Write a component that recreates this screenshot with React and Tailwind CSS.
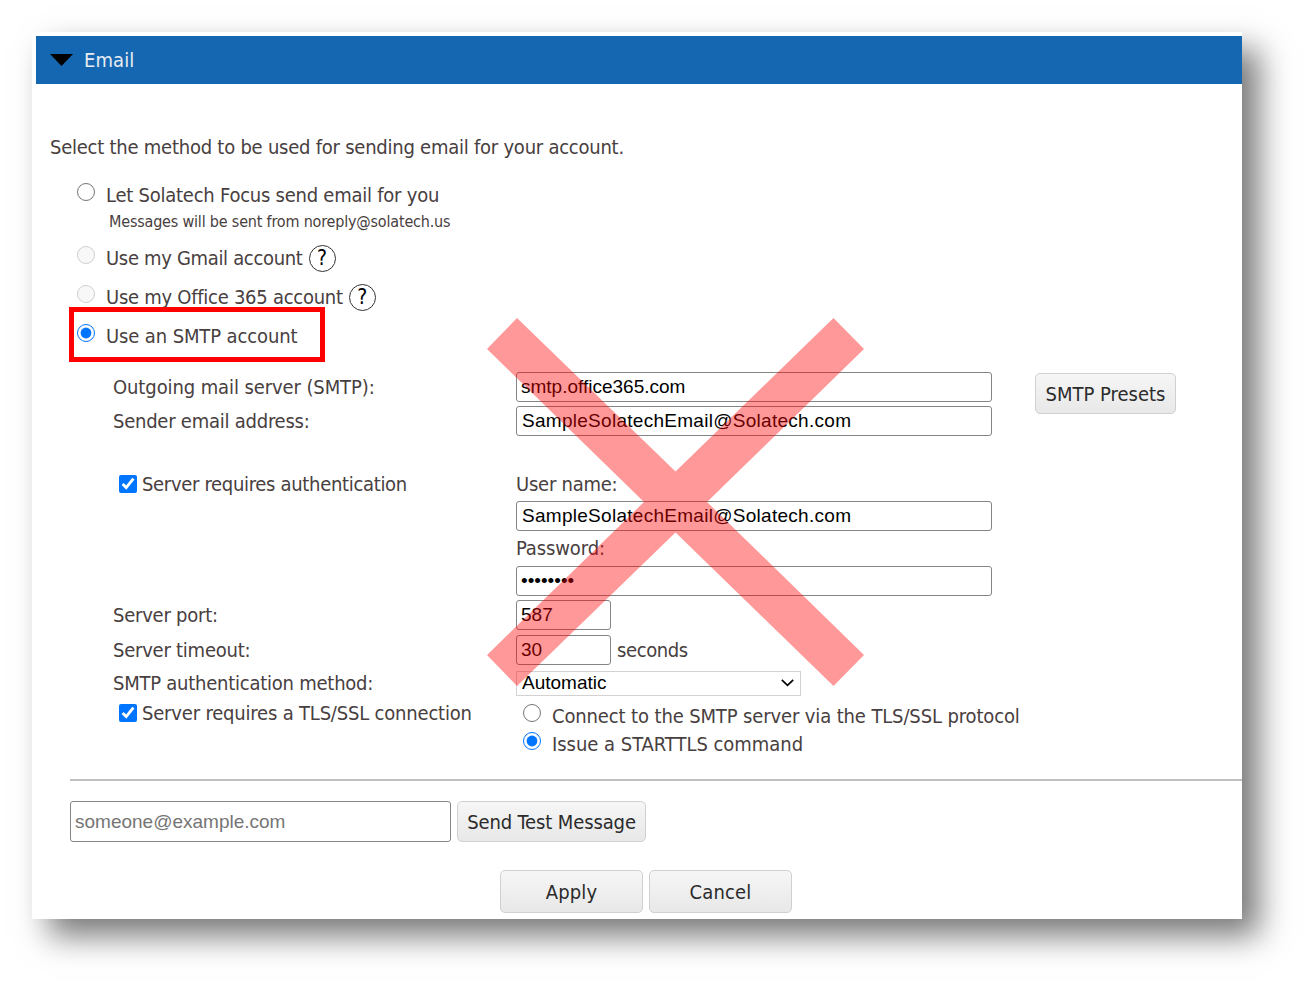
import React, { useState } from "react";

const textInput =
	"border border-[#858585] rounded-[3px] bg-white text-black outline-none font-['Liberation_Sans',Arial,sans-serif] text-[19px] tracking-normal";

const grayButton =
	"shrink-0 whitespace-nowrap rounded-[5px] border border-[#d0d0d0] bg-linear-to-b from-[#f6f6f6] to-[#e8e8e8] text-[20px] text-[#2b2b2b]";

const HelpIcon = () => (
	<span className="ml-[6px] flex h-[27px] w-[27px] items-center justify-center rounded-full border border-[#333] text-[21px] leading-none text-black">
		?
	</span>
);

const RadioOption = ({ label, className = "", ...props }) => (
	<label className={`flex h-[28px] items-center ${className}`}>
		<input type="radio" className="mb-[6px] h-[18px] w-[18px] shrink-0" {...props} />
		<span className="ml-[11px] whitespace-nowrap">{label}</span>
	</label>
);

const CheckOption = ({ label, className = "" }) => (
	<label className={`ml-[6px] flex items-center ${className}`}>
		<input type="checkbox" defaultChecked className="h-[18px] w-[18px] accent-[#0075ff]" />
		<span className="ml-[5px] whitespace-nowrap">{label}</span>
	</label>
);

// Label on the left, control on the right
const Row = ({ label, className, children }) => (
	<div className={`grid grid-cols-[403px_1fr] ${className}`}>
		<div className="flex items-center whitespace-nowrap">{label}</div>
		<div className="flex items-center">{children}</div>
	</div>
);

const App = () => {
	const [method, setMethod] = useState("smtp");
	const [tls, setTls] = useState("starttls");

	return (
		<div className="h-[984px] w-[1307px] overflow-hidden bg-white pt-[32px] pl-[32px] font-['DejaVu_Sans_Condensed','Noto_Sans',Tahoma,sans-serif] text-[20px] leading-[26px] tracking-[-0.24px] text-[#484040]">
			<div className="relative h-[887px] w-[1210px] bg-white pt-[4px] shadow-[17px_17px_30px_rgba(0,0,0,0.53)]">
				{/* Header */}
				<div className="ml-[4px] flex h-[48px] items-center bg-[#1667b1] pl-[14px] text-[#e9edf1]">
					<svg width="23" height="12" viewBox="0 0 23 12">
						<path d="M0 0H23L11.5 12Z" fill="#000" />
					</svg>
					<span className="ml-[11px] tracking-[0.1px]">Email</span>
				</div>

				<p className="mt-[50px] ml-[18px] whitespace-nowrap">
					<span>Select the method to be used for sending email for your account.</span>
				</p>

				{/* Sending method */}
				<div className="mt-[21px] ml-[45px]">
					<RadioOption
						label="Let Solatech Focus send email for you"
						name="method"
						checked={method === "focus"}
						onChange={() => setMethod("focus")}
					/>
					<p className="ml-[32px] h-[26px] text-[16px] tracking-[-0.19px]">
						<span>Messages will be sent from noreply@solatech.us</span>
					</p>
					<div className="mt-[9px] flex items-center">
						<RadioOption className="tracking-[-0.33px]" label="Use my Gmail account" name="method" disabled />
						<HelpIcon />
					</div>
					<div className="mt-[11px] flex items-center">
						<RadioOption className="tracking-[-0.27px]" label="Use my Office 365 account" name="method" disabled />
						<HelpIcon />
					</div>
					<RadioOption
						className="mt-[11px] tracking-[-0.12px]"
						label="Use an SMTP account"
						name="method"
						checked={method === "smtp"}
						onChange={() => setMethod("smtp")}
					/>
				</div>

				{/* SMTP settings */}
				<div className="mt-[22px] ml-[81px]">
					<Row className="h-[30px]" label={<span className="tracking-[-0.1px]">Outgoing mail server (SMTP):</span>}>
						<input className={`${textInput} h-[30px] w-[476px] pl-[4px]`} defaultValue="smtp.office365.com" />
						<button className={`${grayButton} mt-[1px] mb-[-12px] ml-[43px] h-[41px] w-[141px] tracking-normal`}>
							<span>SMTP Presets</span>
						</button>
					</Row>
					<Row className="mt-[4px] h-[30px]" label={<span>Sender email address:</span>}>
						<input
							className={`${textInput} h-[30px] w-[476px] pl-[5px] tracking-[0.28px]!`}
							defaultValue="SampleSolatechEmail@Solatech.com"
						/>
					</Row>
					<Row
						className="mt-[35px] h-[26px]"
						label={<CheckOption className="tracking-[-0.32px]" label="Server requires authentication" />}
					>
						<span>User name:</span>
					</Row>
					<Row className="mt-[4px] h-[30px]">
						<input
							className={`${textInput} h-[30px] w-[476px] pl-[5px] tracking-[0.28px]!`}
							defaultValue="SampleSolatechEmail@Solatech.com"
						/>
					</Row>
					<Row className="mt-[4px] h-[26px]">
						<span className="tracking-[-0.12px]">Password:</span>
					</Row>
					<Row className="mt-[5px] h-[30px]">
						<input type="password" className={`${textInput} h-[30px] w-[476px] pl-[4px]`} defaultValue="password" />
					</Row>
					<Row className="mt-[4px] h-[30px]" label={<span>Server port:</span>}>
						<input className={`${textInput} h-[30px] w-[95px] pl-[4px]`} defaultValue="587" />
					</Row>
					<Row className="mt-[5px] h-[30px]" label={<span>Server timeout:</span>}>
						<input className={`${textInput} h-[30px] w-[95px] pl-[4px]`} defaultValue="30" />
						<span className="ml-[6px] tracking-[-0.4px]">seconds</span>
					</Row>
					<Row className="mt-[5px] h-[25px]" label={<span>SMTP authentication method:</span>}>
						<div className="flex h-[25px] w-[285px] items-center justify-between border border-[#d2d2d2] bg-white pr-[6px] pl-[5px] font-['Liberation_Sans',Arial,sans-serif] text-[19px] tracking-normal text-black">
							<span>Automatic</span>
							<svg width="13" height="8" viewBox="0 0 13 8" fill="none" stroke="#000" strokeWidth="1.7">
								<path d="M0.8 0.9L6.5 6.4L12.2 0.9" />
							</svg>
						</div>
					</Row>
					<Row
						className="mt-[5px] h-[26px]"
						label={<CheckOption className="tracking-[-0.19px]" label="Server requires a TLS/SSL connection" />}
					>
						<RadioOption
							className="mt-[2px] mb-[-4px] ml-[7px] tracking-[-0.13px]"
							label="Connect to the SMTP server via the TLS/SSL protocol"
							name="tls"
							checked={tls === "tls"}
							onChange={() => setTls("tls")}
						/>
					</Row>
					<Row className="mt-[4px] h-[28px]">
						<RadioOption
							className="ml-[7px] tracking-[-0.03px]"
							label="Issue a STARTTLS command"
							name="tls"
							checked={tls === "starttls"}
							onChange={() => setTls("starttls")}
						/>
					</Row>
				</div>

				<div className="mt-[21px] ml-[38px] h-[2px] bg-[#c0c0c0]" />

				{/* Test message */}
				<div className="mt-[20px] ml-[38px] flex gap-[6px]">
					<input
						className={`${textInput} h-[41px] w-[381px] pl-[4px] placeholder:text-[#757575]`}
						placeholder="someone@example.com"
					/>
					<button className={`${grayButton} h-[41px] w-[189px] tracking-[-0.12px]`}>
						<span>Send Test Message</span>
					</button>
				</div>

				<div className="mt-[28px] ml-[468px] flex gap-[6px] tracking-[0.15px]">
					<button className={`${grayButton} h-[43px] w-[143px] tracking-[0.15px]`}>
						<span>Apply</span>
					</button>
					<button className={`${grayButton} h-[43px] w-[143px] tracking-[0.15px]`}>
						<span>Cancel</span>
					</button>
				</div>

				{/* Highlight around the selected method */}
				<div className="pointer-events-none absolute top-[275px] left-[37px] h-[55px] w-[256px] border-5 border-[#fe0000]" />

				{/* Cross over the settings */}
				<svg
					className="pointer-events-none absolute top-[286px] left-[455px]"
					width="377"
					height="368"
					viewBox="0 0 377 368"
				>
					<path
						d="M30 0L188.500 153.500L346.500 0L377 31L220 184L377 337L346.500 368L188.500 214.500L30 368L0 337L157 184L0 31Z"
						fill="#ff0000"
						fillOpacity="0.4"
					/>
				</svg>
			</div>
		</div>
	);
};

export default App;
